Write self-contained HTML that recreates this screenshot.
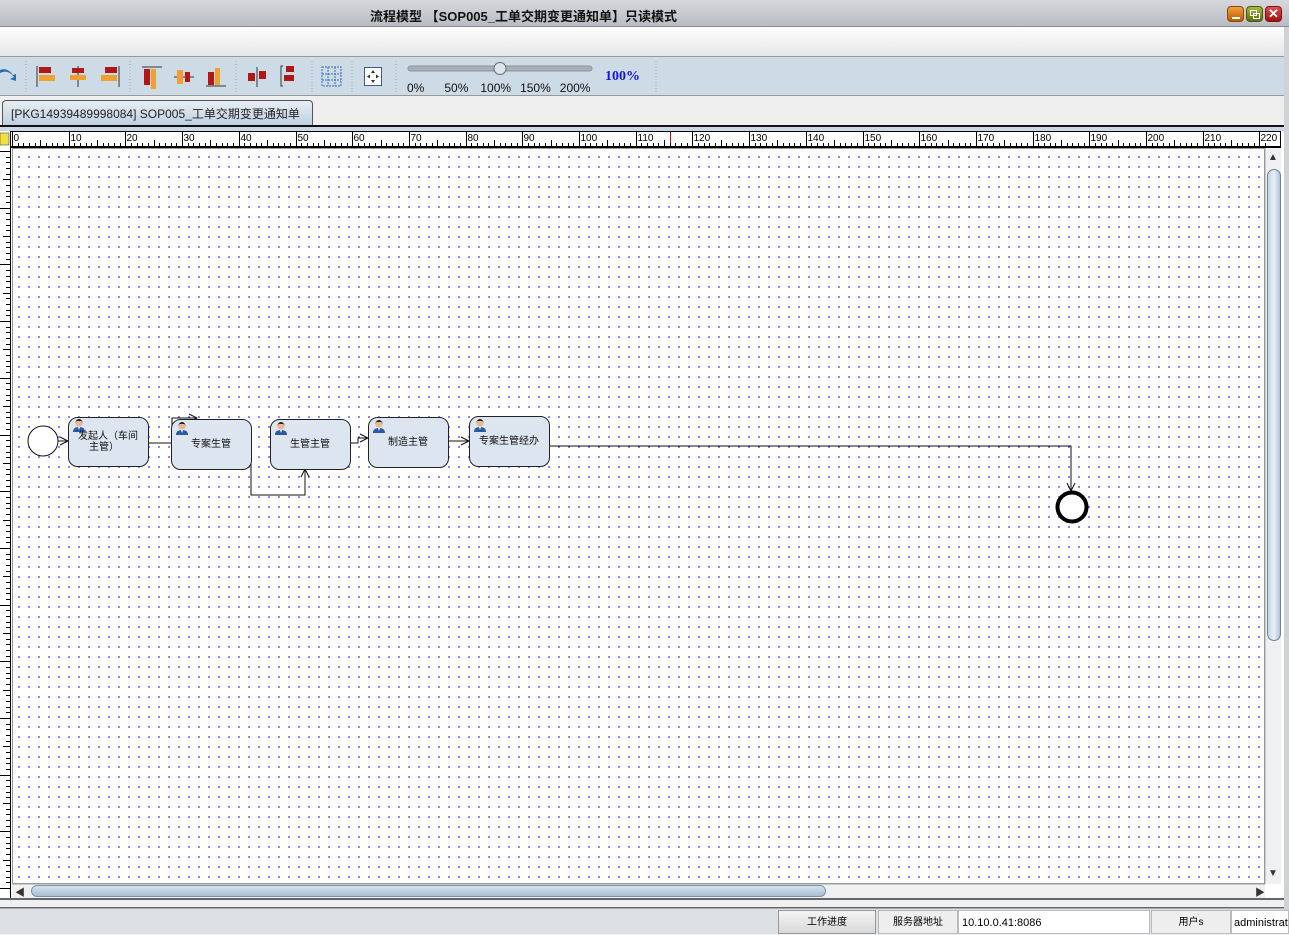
<!DOCTYPE html>
<html><head><meta charset="utf-8">
<style>
*{margin:0;padding:0;box-sizing:border-box}
body{width:1289px;height:934px;overflow:hidden;background:#eef0f2;font-family:"Liberation Sans","Noto Sans CJK SC",sans-serif;position:relative}
.abs{position:absolute}
</style></head><body>
<div class="abs" style="left:0;top:0;width:1289px;height:27px;background:linear-gradient(#d6d8dc,#b9bcc2);border-bottom:1px solid #8a8d92"></div>
<div class="abs" style="left:370px;top:6px;font-size:13px;font-weight:bold;color:#111;white-space:nowrap">流程模型 【SOP005_工单交期变更通知单】只读模式</div>
<div class="abs" style="left:1227px;top:6px;width:17px;height:16px;border-radius:4px;background:linear-gradient(#f0a040,#c05a00);border:1px solid #8a4a10"><div class="abs" style="left:4px;top:10px;width:8px;height:2px;background:#fff"></div></div>
<div class="abs" style="left:1246px;top:6px;width:17px;height:16px;border-radius:4px;background:linear-gradient(#a8b840,#5d7010);border:1px solid #4a5a10"><div class="abs" style="left:3px;top:3px;width:7px;height:6px;border:1.5px solid #fff"></div><div class="abs" style="left:6px;top:6px;width:7px;height:6px;border:1.5px solid #fff"></div></div>
<div class="abs" style="left:1265px;top:6px;width:17px;height:16px;border-radius:4px;background:linear-gradient(#e05050,#a01010);border:1px solid #801010;color:#fff;font-size:13px;font-weight:bold;text-align:center;line-height:14px">✕</div>
<div class="abs" style="left:0;top:27px;width:1284px;height:30px;background:linear-gradient(#fdfdfd,#e6e7e9);border-bottom:1px solid #999"></div>
<div class="abs" style="left:1284px;top:27px;width:5px;height:907px;background:#d0d2d6"></div>
<div class="abs" style="left:0;top:57px;width:1284px;height:39px;background:#cddbe7;border-bottom:1px solid #999"></div>
<svg class="abs" style="left:0;top:57px" width="700" height="39">
<path d="M0 16 Q8 12 14 20 L10 22 L16 24 L16 17 L13 18 Q7 10 0 13Z" fill="#2a6ab0"/>
<g stroke="#aaa" stroke-dasharray="1 2"><line x1="26" y1="4" x2="26" y2="35"/><line x1="130" y1="4" x2="130" y2="35"/><line x1="236" y1="4" x2="236" y2="35"/><line x1="312" y1="4" x2="312" y2="35"/><line x1="352" y1="4" x2="352" y2="35"/><line x1="396" y1="4" x2="396" y2="35"/><line x1="656" y1="4" x2="656" y2="35"/></g>
<g><line x1="37" y1="9" x2="37" y2="30" stroke="#333"/><rect x="39" y="10" width="12" height="6" fill="#b01818"/><rect x="39" y="18" width="16" height="6" fill="#f0a030"/>
<line x1="78" y1="9" x2="78" y2="30" stroke="#333"/><rect x="72" y="11" width="12" height="5" fill="#b01818"/><rect x="70" y="18" width="16" height="5" fill="#f0a030"/>
<line x1="119" y1="9" x2="119" y2="30" stroke="#333"/><rect x="105" y="10" width="12" height="6" fill="#b01818"/><rect x="101" y="18" width="16" height="6" fill="#f0a030"/>
<line x1="142" y1="10" x2="162" y2="10" stroke="#333"/><rect x="144" y="12" width="6" height="16" fill="#b01818"/><rect x="151" y="12" width="5" height="20" fill="#f0a030"/>
<line x1="174" y1="20" x2="194" y2="20" stroke="#333"/><rect x="177" y="13" width="6" height="14" fill="#f0a030"/><rect x="185" y="15" width="5" height="10" fill="#b01818"/>
<line x1="206" y1="29" x2="226" y2="29" stroke="#333"/><rect x="208" y="15" width="6" height="13" fill="#b01818"/><rect x="215" y="11" width="5" height="17" fill="#f0a030"/>
<line x1="257" y1="10" x2="257" y2="30" stroke="#333"/><rect x="248" y="16" width="7" height="8" fill="#b01818"/><rect x="259" y="14" width="7" height="8" fill="#b01818"/>
<rect x="286" y="9" width="8" height="6" fill="#b01818"/><rect x="284" y="18" width="10" height="6" fill="#b01818"/><path d="M283 9h-2v20h2" fill="none" stroke="#333"/>
<rect x="322" y="10" width="19" height="19" fill="none" stroke="#3a6ac0" stroke-dasharray="2 1"/><line x1="328" y1="10" x2="328" y2="29" stroke="#3a6ac0" stroke-dasharray="2 1"/><line x1="335" y1="10" x2="335" y2="29" stroke="#3a6ac0" stroke-dasharray="2 1"/><line x1="322" y1="17" x2="341" y2="17" stroke="#3a6ac0" stroke-dasharray="2 1"/><line x1="322" y1="23" x2="341" y2="23" stroke="#3a6ac0" stroke-dasharray="2 1"/>
<rect x="364.5" y="10.5" width="17" height="18" fill="#fff" stroke="#3a5a90"/><path d="M373 13l-2 3h4zM373 26l-2-3h4zM367 19.5l3-2v4zM379 19.5l-3-2v4z" fill="#333"/>
<rect x="408" y="9" width="184" height="5" rx="2.5" fill="#a8b0b8" stroke="#8a929a"/><circle cx="500" cy="11.5" r="6" fill="#dde4ea" stroke="#667"/>
</g></svg>
<div class="abs" style="left:407px;top:81px;font-size:12px;color:#111;white-space:nowrap">0%<span style="margin-left:20px">50%</span><span style="margin-left:12px">100%</span><span style="margin-left:9px">150%</span><span style="margin-left:9px">200%</span></div>
<div class="abs" style="left:605px;top:69px;font-size:14px;font-weight:bold;color:#1515e0;font-family:'Liberation Serif',serif">100%</div>
<div class="abs" style="left:0;top:97px;width:1284px;height:29px;background:#efefef"></div>
<div class="abs" style="left:2px;top:100px;width:311px;height:26px;background:linear-gradient(#e8eef4,#bccfe0);border:1px solid #555;border-bottom:none;border-radius:4px 4px 0 0;font-size:12px;color:#222;padding:4px 0 0 8px;white-space:nowrap">[PKG14939489998084] SOP005_工单交期变更通知单</div>
<div class="abs" style="left:0;top:125px;width:1284px;height:2px;background:#111"></div>
<div class="abs" style="left:0;top:127px;width:1284px;height:4px;background:#c9d7e6"></div>
<div class="abs" style="left:0;top:131px;width:1284px;height:777px;background:#fff"></div>
<svg class="abs" id="rul" style="left:0;top:131px" width="1284" height="777"></svg>
<div class="abs" style="left:12px;top:148px;width:1253px;height:736px;border:1px solid #999;background-color:#fff;background-image:radial-gradient(circle,#1a1aff 0.7px,transparent 0.9px);background-size:10px 10px;background-position:1px 3px"></div>
<div class="abs" style="left:1265px;top:148px;width:16px;height:736px;background:#eef0f2;border-left:1px solid #ccc"></div>
<div class="abs" style="left:1268px;top:152px;font-size:10px;color:#333">▲</div>
<div class="abs" style="left:1268px;top:868px;font-size:10px;color:#333">▼</div>
<div class="abs" style="left:1267px;top:169px;width:14px;height:472px;border-radius:7px;background:linear-gradient(90deg,#c3d5e6,#e8f0f8,#b0c4d8);border:1px solid #6a82a0"></div>
<div class="abs" style="left:12px;top:884px;width:1253px;height:14px;background:#eef0f2;border-top:1px solid #ccc"></div>
<div class="abs" style="left:15px;top:884px;font-size:10px;color:#333">◀</div>
<div class="abs" style="left:1255px;top:884px;font-size:10px;color:#333">▶</div>
<div class="abs" style="left:31px;top:885px;width:795px;height:12px;border-radius:6px;background:linear-gradient(#d5e2ee,#a9bed2);border:1px solid #7a90aa"></div>
<div class="abs" style="left:0;top:898px;width:1284px;height:10px;background:#eef0f2;border-top:2px solid #666;border-bottom:1px solid #666"></div>
<div class="abs" style="left:0;top:908px;width:1284px;height:26px;background:#dde0e4;border-top:1px solid #aaa"></div>
<div class="abs" style="left:778px;top:910px;width:98px;height:24px;border:1px solid #999;background:linear-gradient(#f4f4f4,#d8d8d8);font-size:10px;text-align:center;line-height:24px">工作进度</div>
<div class="abs" style="left:878px;top:910px;width:80px;height:24px;border:1px solid #bbb;background:#eee;font-size:10px;text-align:center;line-height:24px">服务器地址</div>
<div class="abs" style="left:958px;top:910px;width:192px;height:24px;border:1px solid #bbb;background:#fff;font-size:11px;line-height:24px;padding-left:3px">10.10.0.41:8086</div>
<div class="abs" style="left:1151px;top:910px;width:80px;height:24px;border:1px solid #bbb;background:#eee;font-size:10px;text-align:center;line-height:24px">用户s</div>
<div class="abs" style="left:1231px;top:910px;width:58px;height:24px;border:1px solid #bbb;background:#fff;font-size:11px;line-height:24px;padding-left:2px;overflow:hidden;white-space:nowrap">administrator</div>
<svg class="abs" style="left:0;top:0" width="1289" height="934">
<defs><g id="usr"><circle cx="7" cy="5" r="3.5" fill="#e8b890"/><path d="M3.5 5a3.5 4 0 0 1 7 0l-1-2h-5z" fill="#222"/><path d="M1 14q0-5 6-5q6 0 6 5z" fill="#2a5aa0"/><path d="M6 9l1 3l1-3z" fill="#fff"/></g></defs>
<g fill="none" stroke="#111" stroke-width="1">
<path d="M58 441H68M60 437l8 4l-8 4"/>
<path d="M148 443H172V418H197M189 414l8 4l-8 4"/>
<path d="M251 455V495H305V469M301 477l4-8l4 8"/>
<path d="M350 443H358V438H368M360 434l8 4l-8 4"/>
<path d="M448 441H469M461 437l8 4l-8 4"/>
<path d="M549 446H1071V491M1067 483l4 8l4-8"/>
</g>
<circle cx="43" cy="441" r="15" fill="#fff" stroke="#111"/>
<circle cx="1072" cy="507" r="14.5" fill="#fff" stroke="#000" stroke-width="4"/>
<g fill="#dce5f0" stroke="#222" stroke-width="1">
<rect x="68.5" y="417.5" width="80" height="49" rx="9"/>
<rect x="171.5" y="419.5" width="80" height="50" rx="9"/>
<rect x="270.5" y="419.5" width="80" height="50" rx="9"/>
<rect x="368.5" y="417.5" width="80" height="50" rx="9"/>
<rect x="469.5" y="416.5" width="80" height="50" rx="9"/>
</g>
<use href="#usr" x="72" y="418"/><use href="#usr" x="175" y="421"/><use href="#usr" x="274" y="421"/><use href="#usr" x="372" y="419"/><use href="#usr" x="473" y="418"/>
<g font-size="10" fill="#111" font-family="Liberation Sans, Noto Sans CJK SC, sans-serif" text-anchor="middle">
<text x="108" y="439">发起人（车间</text><text x="104" y="450">主管）</text>
<text x="211" y="447">专案生管</text>
<text x="310" y="447">生管主管</text>
<text x="408" y="445">制造主管</text>
<text x="509" y="444">专案生管经办</text>
</g>
</svg>
<script>
var s=document.getElementById('rul'),h='';
h+='<line x1="10" y1="0.5" x2="1280" y2="0.5" stroke="#000"/><line x1="10" y1="16" x2="1280" y2="16" stroke="#000" stroke-width="2"/><line x1="10.5" y1="0" x2="10.5" y2="777" stroke="#000"/><line x1="1280.5" y1="0" x2="1280.5" y2="17" stroke="#000"/>';
h+='<rect x="0" y="2" width="9" height="12" fill="#f0e040" stroke="#333" stroke-width="0.5"/>';
h+='<line x1="670.5" y1="1" x2="670.5" y2="16" stroke="#e00000"/>';
var u=5.67;
for(var i=0;i<=221;i++){var x=Math.round(12+i*u)+0.5;var l=i%10==0?15:(i%5==0?7:4);h+='<line x1="'+x+'" y1="'+(16-l)+'" x2="'+x+'" y2="16" stroke="#000"/>';if(i%10==0)h+='<text x="'+(x+1)+'" y="10" font-size="10" font-family="Liberation Sans">'+i+'</text>';}
for(var j=0;j<=130;j++){var y=Math.round(20+j*u)+0.5;if(y>770)break;var l=j%10==0?10:(j%5==0?7:4);h+='<line x1="'+(10-l)+'" y1="'+y+'" x2="10" y2="'+y+'" stroke="#000"/>';}
s.innerHTML=h;
</script>
</body></html>
